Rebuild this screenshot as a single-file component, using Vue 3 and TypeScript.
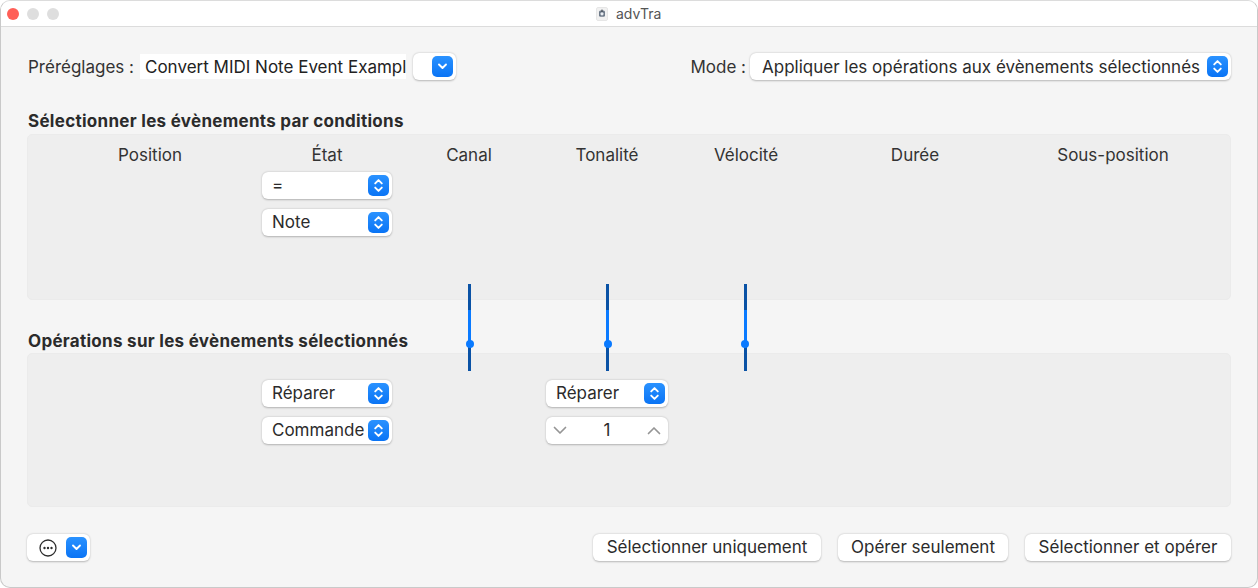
<script setup lang="ts">
const headers: string[] = ['Position', 'État', 'Canal', 'Tonalité', 'Vélocité', 'Durée', 'Sous-position']
const sliders: string[] = ['s1', 's2', 's3']
</script>

<template>
  <div class="window">
    <header class="titlebar">
      <div class="lights">
        <span class="light red"></span>
        <span class="light"></span>
        <span class="light"></span>
      </div>
      <div class="title">
        <svg class="doc" width="12" height="14" viewBox="0 0 12 14">
          <rect x="0.5" y="0.5" width="11" height="13" rx="1.5" fill="#f1f1f1" stroke="#e6e6e6" />
          <rect x="3" y="3.6" width="6" height="6.2" rx="1.5" fill="#6f7b8a" />
          <circle cx="6" cy="6.8" r="1.6" fill="#e9edf2" />
          <rect x="5.4" y="2.6" width="1.2" height="2.4" fill="#3f4853" />
        </svg>
        <span>advTra</span>
      </div>
    </header>

    <main class="content">
      <div class="toprow">
        <div class="presets">
          <span class="label">Préréglages :</span>
          <div class="input">Convert MIDI Note Event Exampl</div>
          <div class="popup narrow">
            <span class="blue">
              <svg width="11" height="7" viewBox="0 0 11 7"><path d="M2 1.5 5.5 5 9 1.5" class="glyph" /></svg>
            </span>
          </div>
        </div>
        <div class="mode">
          <span class="label">Mode :</span>
          <div class="select wide">
            <span class="sel-text">Appliquer les opérations aux évènements sélectionnés</span>
            <span class="blue">
              <svg width="11" height="15" viewBox="0 0 11 15"><path d="M2.2 5.4 5.5 2.1l3.3 3.3M2.2 9.6l3.3 3.3 3.3-3.3" class="glyph" /></svg>
            </span>
          </div>
        </div>
      </div>

      <h2 class="heading first">Sélectionner les évènements par conditions</h2>
      <section class="panel top">
        <div class="grid head">
          <span v-for="h in headers" :key="h" class="col-head">{{ h }}</span>
        </div>
        <div class="grid">
          <div class="stack c2">
            <div class="select">
              <span class="sel-text">=</span>
              <span class="blue"><svg width="11" height="15" viewBox="0 0 11 15"><path d="M2.2 5.4 5.5 2.1l3.3 3.3M2.2 9.6l3.3 3.3 3.3-3.3" class="glyph" /></svg></span>
            </div>
            <div class="select">
              <span class="sel-text">Note</span>
              <span class="blue"><svg width="11" height="15" viewBox="0 0 11 15"><path d="M2.2 5.4 5.5 2.1l3.3 3.3M2.2 9.6l3.3 3.3 3.3-3.3" class="glyph" /></svg></span>
            </div>
          </div>
        </div>
      </section>

      <h2 class="heading second">Opérations sur les évènements sélectionnés</h2>
      <section class="panel bottom">
        <div class="grid">
          <div class="stack c2">
            <div class="select">
              <span class="sel-text">Réparer</span>
              <span class="blue"><svg width="11" height="15" viewBox="0 0 11 15"><path d="M2.2 5.4 5.5 2.1l3.3 3.3M2.2 9.6l3.3 3.3 3.3-3.3" class="glyph" /></svg></span>
            </div>
            <div class="select">
              <span class="sel-text">Commande</span>
              <span class="blue"><svg width="11" height="15" viewBox="0 0 11 15"><path d="M2.2 5.4 5.5 2.1l3.3 3.3M2.2 9.6l3.3 3.3 3.3-3.3" class="glyph" /></svg></span>
            </div>
          </div>
          <div class="stack c4">
            <div class="select">
              <span class="sel-text">Réparer</span>
              <span class="blue"><svg width="11" height="15" viewBox="0 0 11 15"><path d="M2.2 5.4 5.5 2.1l3.3 3.3M2.2 9.6l3.3 3.3 3.3-3.3" class="glyph" /></svg></span>
            </div>
            <div class="stepper">
              <svg width="14" height="9" viewBox="0 0 14 9"><path d="M1.5 1.5 7 7l5.5-5.5" class="step-glyph" /></svg>
              <span>1</span>
              <svg width="14" height="9" viewBox="0 0 14 9"><path d="M1.5 7.5 7 2l5.5 5.5" class="step-glyph" /></svg>
            </div>
          </div>
        </div>
      </section>

      <footer class="footer">
        <div class="popup more">
          <svg width="18" height="18" viewBox="0 0 18 18">
            <circle cx="9" cy="9" r="8" fill="none" stroke="#2e2e2e" stroke-width="1.3" />
            <circle cx="5.5" cy="9" r="1.2" fill="#2e2e2e" />
            <circle cx="9" cy="9" r="1.2" fill="#2e2e2e" />
            <circle cx="12.5" cy="9" r="1.2" fill="#2e2e2e" />
          </svg>
          <span class="blue">
            <svg width="11" height="7" viewBox="0 0 11 7"><path d="M2 1.5 5.5 5 9 1.5" class="glyph" /></svg>
          </span>
        </div>
        <div class="actions">
          <button class="btn b1">Sélectionner uniquement</button>
          <button class="btn b2">Opérer seulement</button>
          <button class="btn b3">Sélectionner et opérer</button>
        </div>
      </footer>

      <div v-for="s in sliders" :key="s" class="slider" :class="s">
        <span class="knob"></span>
      </div>
    </main>
  </div>
</template>

<style>
html, body { margin: 0; background: #fff; overflow: hidden; }
</style>

<style scoped>
.window {
  box-sizing: border-box;
  width: 1258px;
  height: 588px;
  border: 1px solid #c9c9c9;
  border-top-color: #dcdcdc;
  border-radius: 10px;
  background: #f5f5f5;
  overflow: hidden;
  font-family: Inter, "Liberation Sans", sans-serif;
  font-size: 17px;
  color: #2b2b2b;
  display: flex;
  flex-direction: column;
}
.titlebar {
  height: 25px;
  flex: none;
  background: #fff;
  border-bottom: 1px solid #dcdcdc;
  display: flex;
  align-items: center;
  position: relative;
}
.lights { display: flex; gap: 8px; padding-left: 6px; }
.light { width: 12px; height: 12px; border-radius: 50%; background: #dedede; }
.light.red { background: #ff5f57; }
.title {
  position: absolute;
  left: 595px;
  top: 5px;
  display: flex;
  align-items: center;
  gap: 8px;
  font-size: 14px;
  line-height: 16px;
  color: #555;
}
.doc { display: block; }
.content {
  position: relative;
  flex: 1;
  padding: 26px 26px 0;
}
.toprow { display: flex; justify-content: space-between; height: 27px; }
.presets, .mode { display: flex; align-items: center; }
.label { color: #333; }
.presets .label { width: 113px; padding-left: 1px; box-sizing: border-box; }
.mode .label { margin-right: 4px; }
.input {
  width: 266px;
  height: 25px;
  box-sizing: border-box;
  background: #fff;
  padding-left: 5px;
  line-height: 26px;
  white-space: nowrap;
  overflow: hidden;
  color: #222;
}
.popup, .select, .stepper, .btn {
  background: #fff;
  border-radius: 6px;
  box-shadow: 0 0.5px 2px rgba(0, 0, 0, 0.26);
}
.popup { display: flex; align-items: center; height: 27px; box-sizing: border-box; }
.narrow { width: 43px; margin-left: 7px; justify-content: flex-end; padding-right: 3px; }
.blue {
  flex: none;
  width: 21px;
  height: 21px;
  border-radius: 5px;
  background: linear-gradient(#2a92ff, #0a74f5);
  display: flex;
  align-items: center;
  justify-content: center;
}
.blue svg { display: block; }
.glyph { fill: none; stroke: #fff; stroke-width: 1.9; stroke-linecap: round; stroke-linejoin: round; }
.select {
  height: 27px;
  box-sizing: border-box;
  display: flex;
  align-items: center;
  justify-content: space-between;
  padding: 0 3px 0 10px;
  color: #2b2b2b;
  white-space: nowrap;
}
.sel-text { padding-bottom: 1px; }
.wide { width: 481px; padding-left: 12px; }
.wide .sel-text { padding-bottom: 0; }
.heading {
  margin: 0;
  font-size: 17px;
  letter-spacing: 0.29px;
  font-weight: 700;
  line-height: 20px;
  color: #2b2b2b;
  padding-left: 1px;
}
.heading.first { margin-top: 31px; }
.heading.second { margin-top: 31px; }
.panel {
  box-sizing: border-box;
  width: 1204px;
  padding: 0 11px;
  background: #eeeeee;
  border: 1px solid #ebebeb;
  border-radius: 5px;
}
.panel.top { margin-top: 3px; height: 166px; padding-top: 9px; }
.panel.bottom { margin-top: 2px; height: 154px; padding-top: 26px; }
.grid {
  display: grid;
  grid-template-columns: 222px 132px 152px 124px 154px 184px 212px;
}
.head { height: 20px; margin-bottom: 8px; }
.col-head { text-align: center; line-height: 22px; color: #333; }
.stack { display: flex; flex-direction: column; gap: 10px; padding: 0 1px; }
.c2 { grid-column: 2; }
.c4 { grid-column: 4; }
.stepper {
  height: 27px;
  display: flex;
  align-items: center;
  justify-content: space-between;
  padding: 0 7px;
  box-sizing: border-box;
}
.stepper span { padding-bottom: 1px; }
.step-glyph { fill: none; stroke: #959595; stroke-width: 1.7; stroke-linecap: round; stroke-linejoin: round; }
.footer {
  margin-top: 27px;
  width: 1204px;
  display: flex;
  justify-content: space-between;
  align-items: center;
}
.more { width: 63px; justify-content: space-between; padding: 0 3px 0 12px; }
.actions { display: flex; }
.btn {
  height: 27px;
  border: 0;
  padding: 0 0 1px;
  font: inherit;
  color: #2b2b2b;
  text-align: center;
}
.b1 { width: 228px; }
.b2 { width: 170px; margin-left: 17px; }
.b3 { width: 206px; margin-left: 17px; }
.slider {
  position: absolute;
  top: 257px;
  width: 3px;
  height: 87px;
  background: linear-gradient(#0a52a5 0, #0a52a5 26px, #0a7aff 26px, #0a7aff 60px, #0a52a5 60px, #0a52a5 100%);
}
.s1 { left: 467px; }
.s2 { left: 605px; }
.s3 { left: 742.5px; }
.knob {
  position: absolute;
  left: -2.5px;
  top: 56px;
  width: 8px;
  height: 8px;
  border-radius: 50%;
  background: #0a7aff;
}
</style>
